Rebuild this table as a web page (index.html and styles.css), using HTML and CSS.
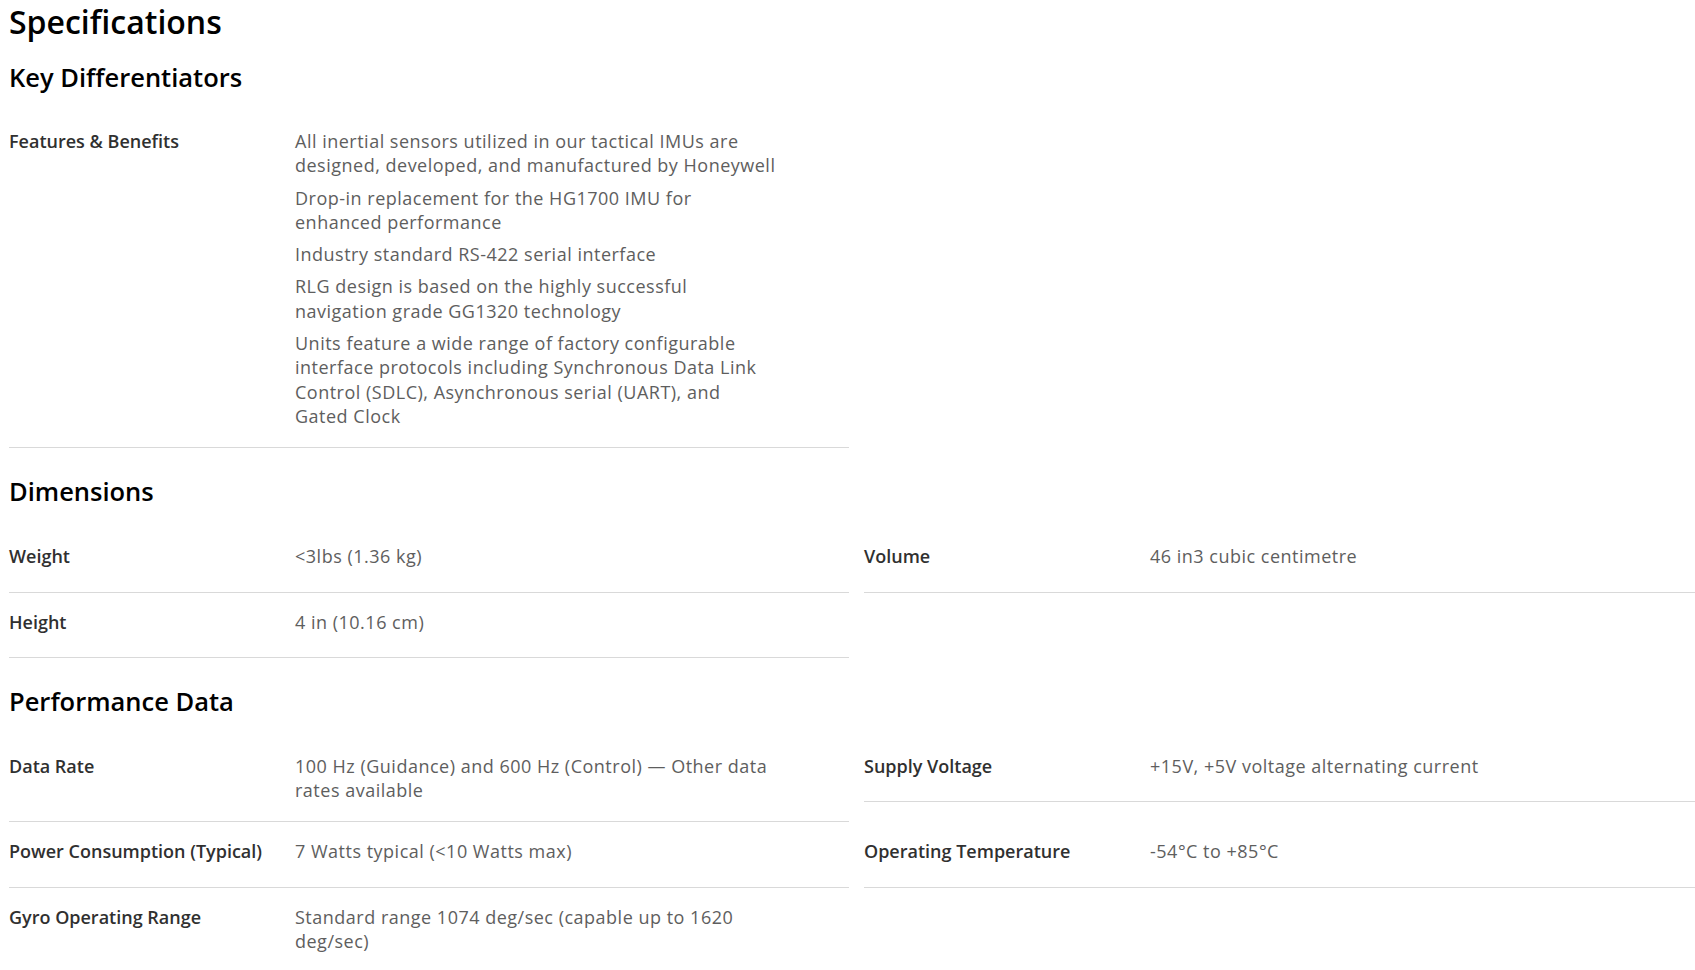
FILE: index.html
```html
<!DOCTYPE html>
<html lang="en">
<head>
    <meta charset="UTF-8">
    <meta name="viewport" content="width=device-width, initial-scale=1.0">
    <title>Specifications</title>
    <link rel="stylesheet" href="styles.css">
</head>
<body>
    <div class="specs">
        <h1>Specifications</h1>

        <!-- Key Differentiators -->
        <div class="spec-section">
            <h2>Key Differentiators</h2>
            <div class="spec-grid">
                <div class="spec-item">
                    <div class="spec-label">Features &amp; Benefits</div>
                    <div class="spec-value">
                        <p>All inertial sensors utilized in our tactical IMUs are designed, developed, and manufactured by Honeywell</p>
                        <p>Drop-in replacement for the HG1700 IMU for enhanced performance</p>
                        <p>Industry standard RS-422 serial interface</p>
                        <p>RLG design is based on the highly successful navigation grade GG1320 technology</p>
                        <p>Units feature a wide range of factory configurable interface protocols including Synchronous Data Link Control (SDLC), Asynchronous serial (UART), and Gated&nbsp;Clock</p>
                    </div>
                </div>
            </div>
        </div>

        <!-- Dimensions -->
        <div class="spec-section">
            <h2>Dimensions</h2>
            <div class="spec-grid">
                <div class="spec-item">
                    <div class="spec-label">Weight</div>
                    <div class="spec-value"><p>&lt;3lbs (1.36 kg)</p></div>
                </div>
                <div class="spec-item">
                    <div class="spec-label">Volume</div>
                    <div class="spec-value"><p>46 in3 cubic centimetre</p></div>
                </div>
                <div class="spec-item">
                    <div class="spec-label">Height</div>
                    <div class="spec-value"><p>4 in (10.16 cm)</p></div>
                </div>
            </div>
        </div>

        <!-- Performance Data -->
        <div class="spec-section">
            <h2>Performance Data</h2>
            <div class="spec-grid">
                <div class="spec-item">
                    <div class="spec-label">Data Rate</div>
                    <div class="spec-value"><p>100 Hz (Guidance) and 600 Hz (Control) &mdash; Other data rates available</p></div>
                </div>
                <div class="spec-item">
                    <div class="spec-label">Supply Voltage</div>
                    <div class="spec-value"><p>+15V, +5V voltage alternating current</p></div>
                </div>
                <div class="spec-item">
                    <div class="spec-label">Power Consumption (Typical)</div>
                    <div class="spec-value"><p>7 Watts typical (&lt;10 Watts max)</p></div>
                </div>
                <div class="spec-item">
                    <div class="spec-label">Operating Temperature</div>
                    <div class="spec-value"><p>-54&deg;C to +85&deg;C</p></div>
                </div>
                <div class="spec-item">
                    <div class="spec-label">Gyro Operating Range</div>
                    <div class="spec-value"><p>Standard range 1074 deg/sec (capable up to 1620 deg/sec)</p></div>
                </div>
            </div>
        </div>
    </div>
</body>
</html>
```

FILE: styles.css
```css
* {
    margin: 0;
    padding: 0;
    box-sizing: border-box;
}

body {
    font-family: 'Open Sans', 'Liberation Sans', sans-serif;
    background: #ffffff;
    color: #303030;
    overflow: hidden; /* right column runs past the window edge */
}

.specs {
    padding: 2px 0 0 9px;
}

h1 {
    font-size: 32px;
    line-height: 40px;
    font-weight: 600;
    color: #000000;
}

h2 {
    font-size: 25.5px;
    line-height: 32px;
    font-weight: 600;
    color: #000000;
    margin: 27px 0 20px;
}

.spec-section:first-of-type h2 {
    margin-top: 19px;
    margin-bottom: 19px;
}

.spec-grid {
    display: grid;
    grid-template-columns: 840px 840px;
    column-gap: 15px;
    align-items: start;
}

.spec-item {
    display: flex;
    padding: 17px 0 11px;
    border-bottom: 1px solid #d9d9d9;
    font-size: 18px;
    line-height: 24.3px;
}

.spec-label {
    width: 286px;
    flex-shrink: 0;
    font-weight: 600;
    color: #303030;
    margin-bottom: 12px;
}

.spec-value {
    width: 484px;
    color: #5e5e5e;
    letter-spacing: 0.5px;
}

.spec-value p {
    margin-bottom: 8px;
}
```
